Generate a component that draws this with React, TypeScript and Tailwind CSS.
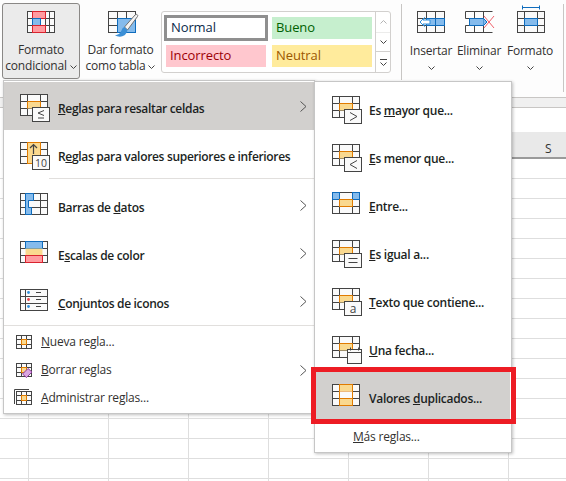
import type { ReactNode } from 'react';

const INK = '#444444';
const ORANGE = '#e07b00';
const AMBER = '#fad98f';
const BLUE = '#0f6cbd';
const SKY = '#85bbec';

// Base 3x3 sheet drawing that almost every Excel icon sits on
function Grid({ children }: { children?: ReactNode }) {
  return (
    <g>
      <rect x="0.5" y="0.5" width="27" height="21" fill="#fafafa" stroke={INK} />
      <path d="M7.5 0.5V21.5M20.5 0.5V21.5M0.5 7.5H27.5M0.5 14.5H27.5" stroke={INK} fill="none" />
      {children}
    </g>
  );
}

function Icon({ children }: { children: ReactNode }) {
  return (
    <svg viewBox="0 0 32 28" className="w-8 h-7 shrink-0 overflow-visible" fill="none">
      {children}
    </svg>
  );
}

function Badge({ children }: { children?: ReactNode }) {
  return (
    <g>
      <rect x="12.5" y="13.5" width="17" height="14" fill="#fafafa" stroke={INK} />
      {children}
    </g>
  );
}

function MiddleCell() {
  return (
    <g>
      <rect x="7.5" y="7.5" width="13" height="7" fill={AMBER} />
      <path d="M7.5 14.5V7.5H20.5V14.5" stroke={ORANGE} />
    </g>
  );
}

const icons: Record<string, ReactNode> = {
  resaltar: (
    <Grid>
      <MiddleCell />
      <Badge>
        <path d="M24 16.5L18 19L24 21.5M18 24H24" stroke={INK} />
      </Badge>
    </Grid>
  ),
  superiores: (
    <Grid>
      <rect x="7.5" y="0.5" width="13" height="21" fill={AMBER} stroke={ORANGE} />
      <path d="M13.5 12V2.5M10 6L13.5 2.5L17 6" stroke={INK} strokeWidth="1.2" />
      <rect x="12.5" y="13.5" width="17" height="14" fill="#fafafa" stroke={INK} />
      <text x="21" y="24.5" textAnchor="middle" fontSize="10.5" fill={INK} fontFamily="Open Sans, sans-serif">
        10
      </text>
    </Grid>
  ),
  barras: (
    <Grid>
      <path d="M5.5 0.5H13.5V7.5H8.5V14.5H11.5V21.5H5.5Z" fill={SKY} stroke={BLUE} />
    </Grid>
  ),
  escalas: (
    <Grid>
      <rect x="5.5" y="0.5" width="17" height="7" fill={SKY} stroke={BLUE} />
      <rect x="5.5" y="7.5" width="17" height="7" fill={AMBER} />
      <rect x="5.5" y="14.5" width="17" height="7" fill="#ff9ba0" stroke="#d9232e" />
    </Grid>
  ),
  conjuntos: (
    <g>
      <rect x="0.5" y="0.5" width="27" height="21" fill="#fafafa" stroke={INK} />
      <path d="M5.5 0.5V21.5M0.5 7.5H27.5M0.5 14.5H27.5" stroke={INK} />
      <circle cx="8.5" cy="3.5" r="1.4" fill="#2f8fdc" />
      <circle cx="8.5" cy="10.5" r="1.4" fill="#e8414a" />
      <circle cx="8.5" cy="17.5" r="1.4" fill="#2f8fdc" />
      <path d="M16 3.5H21M16 10.5H21M16 17.5H21" stroke={INK} />
    </g>
  ),
  mayor: (
    <Grid>
      <MiddleCell />
      <Badge>
        <path d="M18 16.5L25 20.5L18 24.5" stroke={INK} />
      </Badge>
    </Grid>
  ),
  menor: (
    <Grid>
      <MiddleCell />
      <Badge>
        <path d="M25 16.5L18 20.5L25 24.5" stroke={INK} />
      </Badge>
    </Grid>
  ),
  entre: (
    <Grid>
      <rect x="0.5" y="0.5" width="7" height="7" fill={SKY} stroke={BLUE} />
      <rect x="20.5" y="0.5" width="7" height="7" fill={SKY} stroke={BLUE} />
      <rect x="7.5" y="7.5" width="13" height="7" fill={AMBER} stroke={ORANGE} />
    </Grid>
  ),
  igual: (
    <Grid>
      <MiddleCell />
      <Badge>
        <path d="M16.5 18.5H25.5M16.5 22.5H25.5" stroke={INK} />
      </Badge>
    </Grid>
  ),
  texto: (
    <Grid>
      <MiddleCell />
      <rect x="12.5" y="13.5" width="17" height="14" fill="#fafafa" stroke={INK} />
      <text x="21" y="25" textAnchor="middle" fontSize="12" fill={INK} fontFamily="Open Sans, sans-serif">
        a
      </text>
    </Grid>
  ),
  fecha: (
    <Grid>
      <MiddleCell />
      <rect x="15.5" y="13.5" width="14" height="14" fill="#fafafa" stroke={INK} />
      <path d="M15.5 16.5H29.5" stroke={INK} />
      <path d="M18.5 11.5V14.5M26.5 11.5V14.5" stroke={INK} />
    </Grid>
  ),
  duplicados: (
    <Grid>
      <rect x="7.5" y="0.5" width="13" height="7" fill={AMBER} stroke={ORANGE} />
      <rect x="7.5" y="7.5" width="13" height="7" fill="#fafafa" />
      <rect x="7.5" y="14.5" width="13" height="7" fill={AMBER} stroke={ORANGE} />
      <path d="M7.5 7.5V14.5M20.5 7.5V14.5" stroke={ORANGE} />
    </Grid>
  ),
};

function SmallGrid({ children }: { children?: ReactNode }) {
  return (
    <svg viewBox="0 0 17 15" className="w-[17px] h-[15px] shrink-0 overflow-visible" fill="none">
      <rect x="0.5" y="0.5" width="15" height="13" fill="#fafafa" stroke={INK} />
      <path d="M5.5 0.5V13.5M10.5 0.5V13.5M0.5 4.5H15.5M0.5 9.5H15.5" stroke={INK} />
      {children}
    </svg>
  );
}

function Chevron() {
  return (
    <svg viewBox="0 0 7 11" className="w-[7px] h-[11px] shrink-0" fill="none">
      <path d="M0.5 0.5L6 5.5L0.5 10.5" stroke="#555555" />
    </svg>
  );
}

function Caret() {
  return (
    <svg viewBox="0 0 7 4" className="w-[7px] h-1 shrink-0" fill="none">
      <path d="M0.5 0.5L3.5 3.5L6.5 0.5" stroke="#444444" />
    </svg>
  );
}

function Label({ before = '', mark, after }: { before?: string; mark: string; after: string }) {
  return (
    <span className="whitespace-nowrap">
      {before}
      <u>{mark}</u>
      {after}
    </span>
  );
}

function MainRow({ icon, before, mark, after, active }: { icon: string; before?: string; mark: string; after: string; active?: boolean }) {
  return (
    <div className={`h-12 flex items-center pl-4 pr-[7px] ${active ? 'bg-[#d2d0ce]' : ''}`}>
      <div className="mt-1">
        <Icon>{icons[icon]}</Icon>
      </div>
      <div className="ml-[6px] pt-[6px] flex-1 text-[12px] font-semibold text-[#201f1e] tracking-[-0.32px]">
        <Label before={before} mark={mark} after={after} />
      </div>
      {icon !== 'superiores' && <Chevron />}
    </div>
  );
}

function SubRow({ icon, before, mark, after, active }: { icon: string; before?: string; mark: string; after: string; active?: boolean }) {
  return (
    <div className={`h-12 flex items-center pl-[17px] ${active ? 'bg-[#d2d0ce] mr-px' : ''}`}>
      <div className="mt-[6px]">
        <Icon>{icons[icon]}</Icon>
      </div>
      <div className="ml-[5px] pt-2 text-[12px] font-semibold text-[#201f1e] tracking-[-0.28px]">
        <Label before={before} mark={mark} after={after} />
      </div>
    </div>
  );
}

function SmallRow({ icon, before, mark, after, arrow }: { icon: ReactNode; before?: string; mark: string; after: string; arrow?: boolean }) {
  return (
    <div className="h-7 flex items-center pl-3 pr-[7px]">
      {icon}
      <div className="ml-2 flex-1 text-[12px] text-[#323130] tracking-[-0.2px]">
        <Label before={before} mark={mark} after={after} />
      </div>
      {arrow && <Chevron />}
    </div>
  );
}

function RibbonTool({ children, label, className = '' }: { children: ReactNode; label: string; className?: string }) {
  return (
    <div className={`flex flex-col items-center ${className}`}>
      {children}
      <span className="mt-[10px] text-[12px] leading-4 text-[#323130] tracking-[-0.2px]">{label}</span>
      <div className="mt-[7px]">
        <Caret />
      </div>
    </div>
  );
}

function StyleCell({ name, className }: { name: string; className: string }) {
  return <div className={`flex items-center pl-1 text-[13px] tracking-[-0.1px] ${className}`}>{name}</div>;
}

export default function App() {
  const rows = Array.from({ length: 17 });
  const cols = Array.from({ length: 8 });

  return (
    <div className="relative w-[566px] h-[481px] overflow-hidden bg-white font-['Open_Sans',sans-serif]">
      {/* ribbon */}
      <div className="h-[98px] flex items-start pl-[2px] border-b border-[#c8c6c4] bg-[#fdfdfd]">
        <div className="mt-[3px] w-[78px] h-[76px] flex flex-col items-center pt-[7px] bg-[#ebebeb] border border-[#8a8886] rounded-[3px] text-[12px] leading-4 text-[#323130] tracking-[-0.2px]">
          <svg viewBox="0 0 28 22" className="w-7 h-[22px]" fill="none">
            <rect x="0.5" y="0.5" width="27" height="21" fill="#fafafa" stroke={INK} />
            <path d="M5.5 0.5V21.5M18.5 0.5V21.5M22.5 0.5V21.5M0.5 7.5H27.5M0.5 14.5H27.5" stroke={INK} />
            <rect x="5.5" y="0.5" width="13" height="7" fill="#ff9ba0" stroke="#d9232e" />
            <rect x="5.5" y="7.5" width="8" height="7" fill={SKY} stroke={BLUE} />
            <rect x="5.5" y="14.5" width="13" height="7" fill="#ff9ba0" stroke="#d9232e" />
          </svg>
          <span className="mt-[9px]">Formato</span>
          <span className="whitespace-nowrap">
            condicional <span className="inline-block align-middle"><Caret /></span>
          </span>
        </div>
        <div className="mt-[11px] w-[81px] flex flex-col items-center text-[12px] leading-4 text-[#323130] tracking-[-0.25px]">
          <svg viewBox="0 0 32 28" className="w-8 h-7 ml-[6px] overflow-visible" fill="none">
            <rect x="0.5" y="0.5" width="27" height="21" fill="#fafafa" stroke={INK} />
            <path d="M9.5 0.5V21.5M18.5 0.5V21.5M0.5 7.5H27.5M0.5 14.5H27.5" stroke={INK} />
            <rect x="9.5" y="7.5" width="18" height="14" fill={SKY} stroke={BLUE} />
            <path d="M16.5 16L27 4C28.5 2.5 30.5 4 29.5 5.5L19.5 19Z" fill="#f4f4f4" stroke="#707070" />
            <path d="M16.5 16C13.5 17 14 20 12 22C10.5 23.5 9 24 7 24C10.5 27 18 26.5 19.5 19Z" fill="#3b8fd6" />
          </svg>
          <span className="mt-[3px]">Dar formato</span>
          <span className="whitespace-nowrap">
            como tabla <span className="inline-block align-middle"><Caret /></span>
          </span>
        </div>
        <div className="mt-[11px] w-[230px] h-[62px] flex border border-[#d2d0ce] rounded-[3px] bg-white">
          <div className="flex-1 grid grid-cols-[106px_100px] grid-rows-[26px_22px] gap-x-[2px] gap-y-1 pt-[3px] pl-[2px]">
            <StyleCell name="Normal" className="border-[3px] border-[#8f8f8f] text-[#0b2a4a] mr-[2px]" />
            <StyleCell name="Bueno" className="bg-[#c6efce] text-[#006100] my-[2px]" />
            <StyleCell name="Incorrecto" className="bg-[#ffc7ce] text-[#9c0006] ml-[2px] mr-[4px]" />
            <StyleCell name="Neutral" className="bg-[#ffeb9c] text-[#9c5700]" />
          </div>
          <div className="w-[15px] flex flex-col border-l border-[#d2d0ce] text-[#444444]">
            <div className="h-[21px] flex items-center justify-center border-b border-[#d2d0ce] opacity-40">
              <div className="rotate-180">
                <Caret />
              </div>
            </div>
            <div className="h-[19px] flex items-center justify-center border-b border-[#d2d0ce]">
              <Caret />
            </div>
            <div className="flex-1 flex flex-col items-center justify-center gap-[2px]">
              <div className="w-[7px] h-px bg-[#444444]" />
              <Caret />
            </div>
          </div>
        </div>
        <div className="ml-[10px] mt-[4px] w-px h-[76px] bg-[#c8c6c4]" />
        <div className="flex pt-[11px] ml-[5px]">
          <RibbonTool label="Insertar" className="w-[48px]">
            <svg viewBox="0 0 28 22" className="w-7 h-[22px] overflow-visible" fill="none">
              <rect x="0.5" y="0.5" width="27" height="21" fill="#fafafa" stroke={INK} />
              <path d="M9.5 0.5V21.5M18.5 0.5V21.5M0.5 7.5H27.5M0.5 14.5H27.5" stroke={INK} />
              <rect x="9.5" y="7.5" width="18" height="7" fill={SKY} stroke={BLUE} />
              <path d="M18.5 7.5V14.5" stroke={BLUE} />
              <path d="M13 9H6L7.5 6.5L3 11L7.5 15.5L6 13H13Z" fill="#ffffff" stroke="#2f8fdc" />
            </svg>
          </RibbonTool>
          <RibbonTool label="Eliminar" className="w-[48px]">
            <svg viewBox="0 0 28 22" className="w-7 h-[22px] overflow-visible" fill="none">
              <path d="M0.5 7.5V0.5H27.5M0.5 14.5V21.5H27.5M9.5 0.5V7.5M18.5 0.5V7.5M9.5 14.5V21.5M18.5 14.5V21.5M0.5 7.5H5M0.5 14.5H5" stroke={INK} />
              <rect x="4.5" y="7.5" width="14" height="7" fill={SKY} stroke={BLUE} />
              <path d="M18.5 7.5L22 11L18.5 14.5" fill={SKY} stroke={BLUE} />
              <path d="M19 5L29 17M29 5L19 17" stroke="#f0606a" />
            </svg>
          </RibbonTool>
          <RibbonTool label="Formato" className="w-[54px] -mt-[1px]">
            <svg viewBox="0 0 28 22" className="w-7 h-[22px] overflow-visible ml-[2px] mt-[1px]" fill="none">
              <path d="M5.5 -3.5H22.5M5.5 -5.5V-1.5M22.5 -5.5V-1.5" stroke={BLUE} />
              <rect x="0.5" y="0.5" width="27" height="21" fill="#fafafa" stroke={INK} />
              <path d="M7.5 0.5V21.5M20.5 0.5V21.5M0.5 7.5H27.5M0.5 14.5H27.5" stroke={INK} />
              <rect x="7.5" y="7.5" width="13" height="7" fill={SKY} stroke={BLUE} />
            </svg>
          </RibbonTool>
        </div>
        <div className="ml-[6px] mt-[4px] w-px h-[88px] bg-[#c8c6c4]" />
      </div>

      {/* formula bar + empty strip */}
      <div className="h-[10px] bg-[#f0f0f0] border-b border-[#c8c6c4]" />
      <div className="h-[24px] bg-white" />

      {/* sheet */}
      <div className="flex flex-col">
        <div className="h-[27px] flex bg-[#e9e9e9] border-b-2 border-[#9a9a9a] text-[12px] text-[#333333] ml-[6px]">
          <div className="ml-auto w-[58px] flex items-center pl-[37px] pt-2">S</div>
        </div>
        {rows.map((_, r) => (
          <div key={r} className="h-5 flex border-b border-[#dedede] pl-7 shrink-0">
            {cols.map((_, c) => (
              <div key={c} className="w-20 shrink-0 border-l border-[#dedede]" />
            ))}
          </div>
        ))}
      </div>

      {/* main dropdown */}
      <div className="absolute left-[3px] top-[80px] w-[312px] h-[334px] pt-px bg-white border border-[#c6c6c6] shadow-[1px_1px_3px_rgba(0,0,0,0.25)]">
        <MainRow icon="resaltar" mark="R" after="eglas para resaltar celdas" active />
        <MainRow icon="superiores" before="R" mark="e" after="glas para valores superiores e inferiores" />
        <div className="ml-[45px] h-px bg-[#e1dfdd] mb-[2px]" />
        <MainRow icon="barras" before="Barras de " mark="d" after="atos" />
        <MainRow icon="escalas" before="E" mark="s" after="calas de color" />
        <MainRow icon="conjuntos" mark="C" after="onjuntos de iconos" />
        <div className="h-px bg-[#e1dfdd] mb-[2px]" />
        <SmallRow
          icon={
            <SmallGrid>
              <rect x="5.5" y="4.5" width="5" height="5" fill={AMBER} stroke={ORANGE} />
            </SmallGrid>
          }
          mark="N"
          after="ueva regla..."
        />
        <SmallRow
          icon={
            <SmallGrid>
              <rect x="5.5" y="4.5" width="5" height="5" fill={AMBER} stroke={ORANGE} />
              <path d="M6.5 11L12 5.5L16 9L10.5 14.5Z" fill="#d9a6e0" stroke="#8e3a9d" />
            </SmallGrid>
          }
          mark="B"
          after="orrar reglas"
          arrow
        />
        <SmallRow
          icon={
            <SmallGrid>
              <path d="M-1.5 13V-1.5H13" stroke={INK} />
              <rect x="5.5" y="4.5" width="5" height="5" fill={AMBER} stroke={ORANGE} />
            </SmallGrid>
          }
          mark="A"
          after="dministrar reglas..."
        />
      </div>

      {/* submenu */}
      <div className="absolute left-[314px] top-[81px] w-[198px] h-[372px] pt-[1px] bg-white border border-[#c6c6c6] shadow-[1px_1px_3px_rgba(0,0,0,0.25)]">
        <SubRow icon="mayor" before="Es " mark="m" after="ayor que..." />
        <SubRow icon="menor" mark="E" after="s menor que..." />
        <SubRow icon="entre" mark="E" after="ntre..." />
        <SubRow icon="igual" mark="E" after="s igual a..." />
        <SubRow icon="texto" mark="T" after="exto que contiene..." />
        <SubRow icon="fecha" mark="U" after="na fecha..." />
        <SubRow icon="duplicados" before="Valores " mark="d" after="uplicados..." active />
        <div className="h-[36px] flex items-center pl-[38px] text-[12px] text-[#323130] tracking-[-0.2px]">
          <Label mark="M" after="ás reglas..." />
        </div>
      </div>

      {/* red callout around the chosen rule */}
      <div className="absolute left-[311px] top-[367px] w-[205px] h-[57px] border-[5px] border-[#ed1c24]" />
    </div>
  );
}
